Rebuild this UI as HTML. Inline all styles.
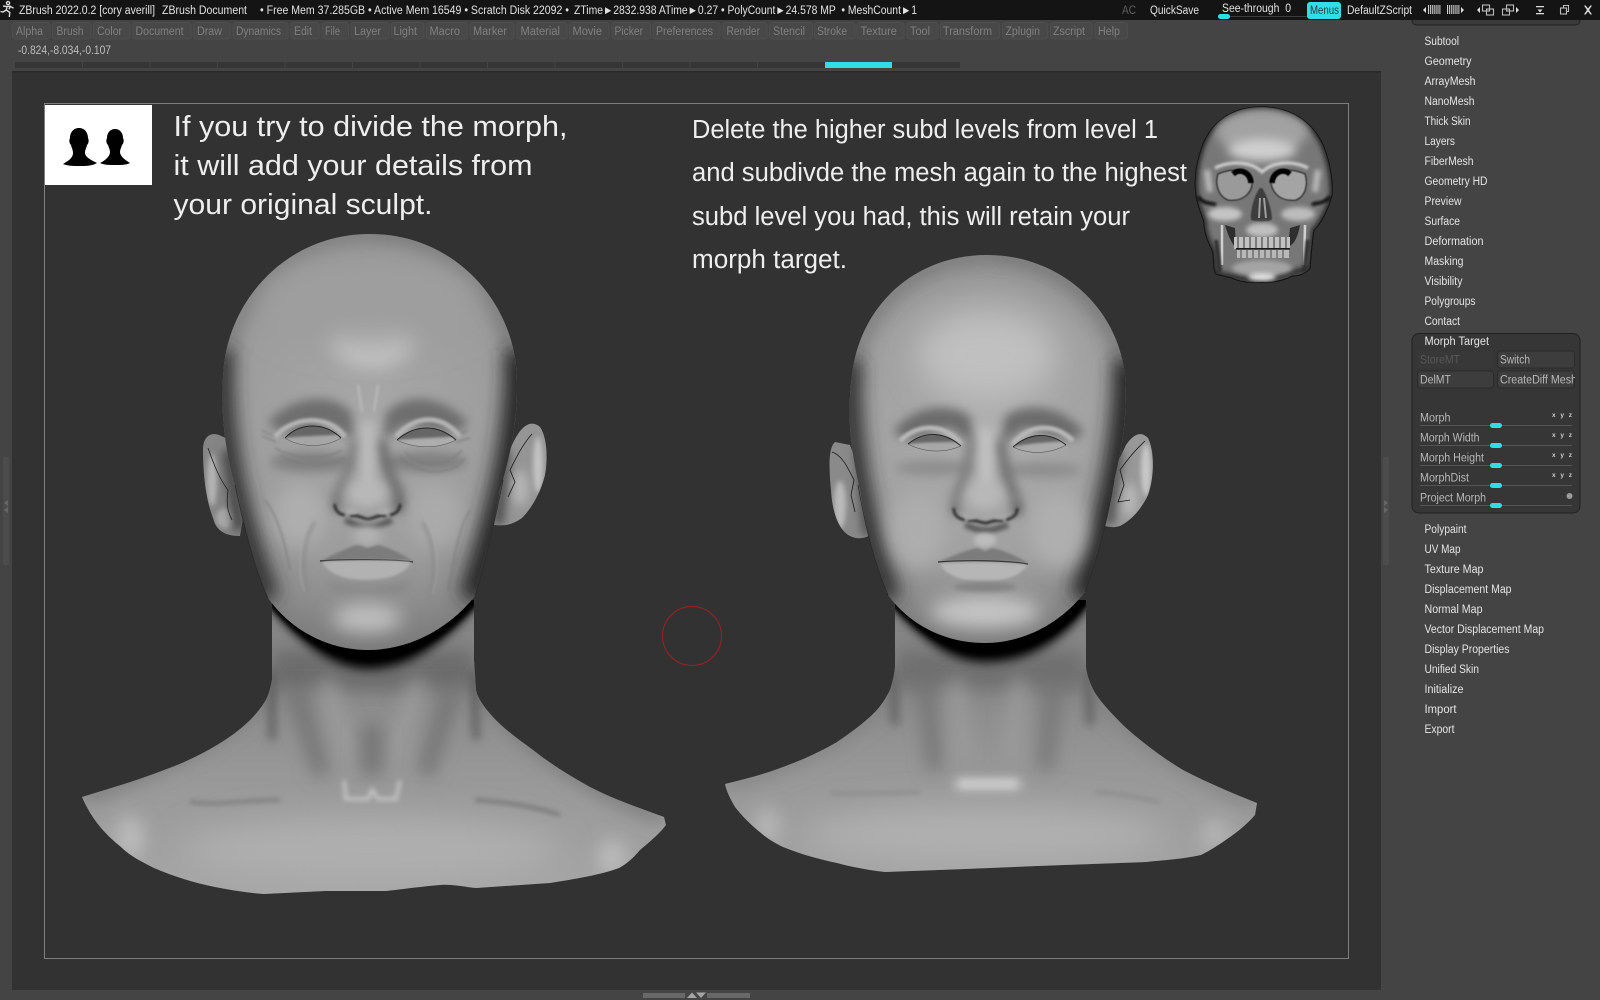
<!DOCTYPE html>
<html><head><meta charset="utf-8"><title>ZBrush</title>
<style>
html,body{margin:0;padding:0;width:1600px;height:1000px;overflow:hidden;background:#444}
svg{display:block;position:absolute;left:0;top:0}
text{font-family:"Liberation Sans",sans-serif}
</style></head><body>
<svg width="1600" height="1000" viewBox="0 0 1600 1000" xmlns="http://www.w3.org/2000/svg">
<defs>
<filter id="b05" filterUnits="userSpaceOnUse" x="0" y="0" width="1600" height="1000"><feGaussianBlur stdDeviation="0.5"/></filter>
<filter id="b1" filterUnits="userSpaceOnUse" x="0" y="0" width="1600" height="1000"><feGaussianBlur stdDeviation="1.2"/></filter>
<filter id="b2" filterUnits="userSpaceOnUse" x="0" y="0" width="1600" height="1000"><feGaussianBlur stdDeviation="2.5"/></filter>
<filter id="b4" filterUnits="userSpaceOnUse" x="0" y="0" width="1600" height="1000"><feGaussianBlur stdDeviation="5"/></filter>
<filter id="b8" filterUnits="userSpaceOnUse" x="0" y="0" width="1600" height="1000"><feGaussianBlur stdDeviation="9"/></filter>
<filter id="b15" filterUnits="userSpaceOnUse" x="0" y="0" width="1600" height="1000"><feGaussianBlur stdDeviation="16"/></filter>
<radialGradient id="lhg" gradientUnits="userSpaceOnUse" cx="368" cy="420" r="230">
<stop offset="0" stop-color="#a8a8a8"/><stop offset=".62" stop-color="#9c9c9c"/><stop offset=".85" stop-color="#8a8a8a"/><stop offset="1" stop-color="#7a7a7a"/></radialGradient>
<radialGradient id="rhg" gradientUnits="userSpaceOnUse" cx="985" cy="430" r="215">
<stop offset="0" stop-color="#aeaeae"/><stop offset=".62" stop-color="#a0a0a0"/><stop offset=".85" stop-color="#8c8c8c"/><stop offset="1" stop-color="#7a7a7a"/></radialGradient>
<linearGradient id="chest" x1="0" y1="660" x2="0" y2="895" gradientUnits="userSpaceOnUse"><stop offset="0" stop-color="#858585"/><stop offset=".5" stop-color="#989898"/><stop offset="1" stop-color="#a6a6a6"/></linearGradient>
<clipPath id="lhc"><path d="M370 234C290 234 232 295 224 365C219 410 226 460 238 495C246 535 255 570 268 598C292 632 330 650 368 650C408 650 448 630 475 596C485 565 495 520 500 490C512 450 520 410 516 365C508 295 450 234 370 234Z"/></clipPath>
<clipPath id="lsc"><path d="M272 600L272 680C270 690 268 697 264 703C256 715 247 724 235 733C219 745 200 755 182 763C160 772 140 779 121 785L82 797C92 820 105 834 121 847C130 856 142 862 154 868C175 877 195 883 215 887C230 890 248 893 264 894L325 891L386 891C405 889 425 886 440 885C452 884 464 887 476 888L550 883C575 879 600 875 619 868C628 863 634 857 640 850C652 840 660 833 666 825L664 817C640 808 615 800 590 787C572 777 552 765 533 750C518 739 504 729 493 717C484 707 478 699 476 690L474 660L474 600Z"/></clipPath>
<clipPath id="rhc"><path d="M987 255C915 255 860 305 852 375C846 420 852 455 860 490C866 530 875 565 888 595C910 625 945 643 985 643C1025 643 1062 622 1085 592C1095 565 1107 525 1112 490C1122 450 1128 415 1125 375C1117 305 1058 255 987 255Z"/></clipPath>
<clipPath id="rsc"><path d="M895 600L895 667C894 677 892 684 890 690C886 698 881 706 874 713C863 724 850 733 837 742C820 752 802 760 783 767C765 774 745 779 725 784C727 793 731 800 735 807C742 816 751 825 761 833C768 839 775 843 783 847C800 854 818 859 837 863C852 867 868 870 885 872L965 869L1037 866L1146 862C1165 860 1183 859 1201 855C1211 850 1220 844 1230 837C1240 830 1248 823 1255 815L1257 803C1232 793 1208 783 1183 770C1163 758 1143 743 1125 727C1115 717 1103 705 1095 693C1091 685 1087 677 1086 667L1086 600Z"/></clipPath>
<clipPath id="skc"><path d="M1261 107C1225 107 1207 130 1201 150C1196 165 1194 180 1196 195C1198 207 1202 215 1204 222C1204 235 1210 245 1213 252C1214 265 1214 272 1216 274L1232 278C1240 282 1252 283 1262 282C1272 283 1285 280 1292 276C1300 276 1308 272 1310 268C1311 255 1312 240 1314 230C1320 225 1328 210 1332 195C1333 180 1330 165 1325 150C1318 130 1298 107 1261 107Z"/></clipPath>
<clipPath id="e1"><path d="M219 435C210 432 203 437 203 450C203 475 206 500 213 518C216 530 224 536 240 536L246 500L230 440Z"/></clipPath>
<clipPath id="e2"><path d="M512 445C522 423 532 420 540 427C547 437 548 458 545 475C540 495 530 510 522 518C512 525 505 526 494 525L500 480Z"/></clipPath>
<clipPath id="e3"><path d="M835 442C828 448 829 470 831 490C832 510 838 530 850 536C858 540 866 538 870 535L866 490L850 445Z"/></clipPath>
<clipPath id="e4"><path d="M1126 445C1135 432 1142 432 1148 438C1154 450 1155 475 1148 495C1142 508 1132 520 1120 526C1113 528 1110 527 1105 526L1114 470Z"/></clipPath>
<clipPath id="cdm"><rect x="1497" y="371" width="78" height="17"/></clipPath>
<clipPath id="ey1"><path d="M285 438C300 422 325 422 341 438C325 448 300 448 285 438Z"/></clipPath>
<clipPath id="ey2"><path d="M397 440C415 424 438 424 456 440C438 449 415 449 397 440Z"/></clipPath>
<clipPath id="ey3"><path d="M908 444C925 430 945 432 961 446C945 453 925 453 908 444Z"/></clipPath>
<clipPath id="ey4"><path d="M1013 447C1030 432 1050 432 1066 445C1050 454 1030 455 1013 447Z"/></clipPath>
</defs>

<!-- app chrome -->
<rect width="1600" height="1000" fill="#444"/>
<rect width="1600" height="20" fill="#141414"/>
<rect x="12" y="72" width="1369" height="918" fill="#323232"/>
<rect x="12" y="71" width="1369" height="1.5" fill="#2a2a2a"/>
<rect x="44.500" y="103.500" width="1304" height="855" fill="none" stroke="#7e7e7e" stroke-width="1"/>

<!-- top bar text -->
<g fill="#e2e2e2" font-size="11.5">
<path d="M8 1.500a1.600 1.600 0 1 0 .1 0M3 6l4 .6 3-.4 3.500 2M7 6.500L6.300 10 3 12 .5 11.500M6.300 10l3.500 2.500-.5 4.500M10.500 6.200l-1.500 3" fill="none" stroke="#ddd" stroke-width="1.400"/>
<text x="19" y="14" textLength="136" lengthAdjust="spacingAndGlyphs">ZBrush 2022.0.2 [cory averill]</text>
<text x="162" y="14" textLength="85" lengthAdjust="spacingAndGlyphs">ZBrush Document</text>
<text x="260" y="14" textLength="309" lengthAdjust="spacingAndGlyphs">• Free Mem 37.285GB • Active Mem 16549 • Scratch Disk 22092 •</text>
<text x="574" y="14" textLength="343" lengthAdjust="spacingAndGlyphs" xml:space="preserve">ZTime►2832.938 ATime►0.27 • PolyCount►24.578 MP  • MeshCount►1</text>
<text x="1122" y="14" textLength="14" lengthAdjust="spacingAndGlyphs" fill="#5f5f5f">AC</text>
<text x="1150" y="14" textLength="49" lengthAdjust="spacingAndGlyphs">QuickSave</text>
<text x="1222" y="12" textLength="69" lengthAdjust="spacingAndGlyphs" xml:space="preserve">See-through  0</text>
<text x="1347" y="14" textLength="65" lengthAdjust="spacingAndGlyphs">DefaultZScript</text>
</g>
<rect x="1218" y="16" width="92" height="1" fill="#3c3c3c"/>
<rect x="1218" y="14" width="12" height="5" rx="2.500" fill="#2fdfe4"/>
<rect x="1307" y="2" width="34" height="17" rx="3" fill="#2fdfe4"/>
<text x="1310" y="14" textLength="29" lengthAdjust="spacingAndGlyphs" font-size="11.5" fill="#24414a">Menus</text>
<!-- top bar icons -->
<g fill="#ddd">
<path d="M1423 10l3-3v6zM1464 10l-3-3v6zM1477 10l3-3v6zM1519 10l-3-3v6z"/>
<path d="M1428 9.500h13M1447 9.500h13" stroke="#cfcfcf" stroke-width="9" stroke-dasharray="1 .9" fill="none"/>
<g fill="none" stroke="#bbb" stroke-width="1.100"><rect x="1482.500" y="5" width="7" height="6"/><rect x="1486.500" y="9" width="7" height="6"/><rect x="1506.500" y="5" width="7" height="6"/><rect x="1502.500" y="9" width="7" height="6"/><rect x="1560.500" y="8" width="6" height="6"/><path d="M1563.500 8V5.500h5v6h-2"/></g>
<path d="M1536 6h8v1.300h-8zM1536 13h8v1.300h-8zM1540 12.500l-2.500-3h5z"/>
<path d="M1584 5.500l1.600 0 2.400 3 2.400-3 1.600 0-3 4.500 3 4.500-1.600 0-2.400-3-2.400 3-1.600 0 3-4.500z"/>
</g>

<!-- menu row -->
<g fill="#484848" stroke="#4e4e4e" stroke-width="1">
<rect x="12.5" y="22.5" width="37.500" height="16.500" rx="3"/><rect x="52.5" y="22.5" width="38.500" height="16.500" rx="3"/><rect x="93.500" y="22.5" width="36.500" height="16.500" rx="3"/><rect x="133" y="22.5" width="58" height="16.500" rx="3"/><rect x="193.500" y="22.5" width="36.500" height="16.500" rx="3"/><rect x="233" y="22.5" width="55" height="16.500" rx="3"/><rect x="291" y="22.5" width="28" height="16.500" rx="3"/><rect x="322" y="22.5" width="26.500" height="16.500" rx="3"/><rect x="351" y="22.5" width="38" height="16.500" rx="3"/><rect x="391.500" y="22.5" width="32.500" height="16.500" rx="3"/><rect x="426.500" y="22.5" width="40.500" height="16.500" rx="3"/><rect x="470" y="22.5" width="44" height="16.500" rx="3"/><rect x="517" y="22.5" width="50" height="16.500" rx="3"/><rect x="569.500" y="22.5" width="39.500" height="16.500" rx="3"/><rect x="612" y="22.5" width="38.500" height="16.500" rx="3"/><rect x="653" y="22.5" width="67" height="16.500" rx="3"/><rect x="723" y="22.5" width="44" height="16.500" rx="3"/><rect x="769.500" y="22.5" width="43" height="16.500" rx="3"/><rect x="814.500" y="22.5" width="40.500" height="16.500" rx="3"/><rect x="857" y="22.5" width="47" height="16.500" rx="3"/><rect x="907" y="22.5" width="31" height="16.500" rx="3"/><rect x="940.500" y="22.5" width="59" height="16.500" rx="3"/><rect x="1002.500" y="22.5" width="45" height="16.500" rx="3"/><rect x="1050.500" y="22.5" width="41.500" height="16.500" rx="3"/><rect x="1095" y="22.5" width="32.500" height="16.500" rx="3"/>
</g>
<g fill="#808080" font-size="11.5">
<text x="16" y="35" textLength="27" lengthAdjust="spacingAndGlyphs">Alpha</text>
<text x="56.500" y="35" textLength="27" lengthAdjust="spacingAndGlyphs">Brush</text>
<text x="97" y="35" textLength="25" lengthAdjust="spacingAndGlyphs">Color</text>
<text x="135.500" y="35" textLength="48" lengthAdjust="spacingAndGlyphs">Document</text>
<text x="197" y="35" textLength="25" lengthAdjust="spacingAndGlyphs">Draw</text>
<text x="236" y="35" textLength="45" lengthAdjust="spacingAndGlyphs">Dynamics</text>
<text x="294" y="35" textLength="18" lengthAdjust="spacingAndGlyphs">Edit</text>
<text x="325" y="35" textLength="15" lengthAdjust="spacingAndGlyphs">File</text>
<text x="354" y="35" textLength="27" lengthAdjust="spacingAndGlyphs">Layer</text>
<text x="393.500" y="35" textLength="23.500" lengthAdjust="spacingAndGlyphs">Light</text>
<text x="429.500" y="35" textLength="30.500" lengthAdjust="spacingAndGlyphs">Macro</text>
<text x="473" y="35" textLength="34" lengthAdjust="spacingAndGlyphs">Marker</text>
<text x="520.500" y="35" textLength="39.500" lengthAdjust="spacingAndGlyphs">Material</text>
<text x="572.500" y="35" textLength="29.500" lengthAdjust="spacingAndGlyphs">Movie</text>
<text x="614.500" y="35" textLength="28.500" lengthAdjust="spacingAndGlyphs">Picker</text>
<text x="656" y="35" textLength="57" lengthAdjust="spacingAndGlyphs">Preferences</text>
<text x="726.500" y="35" textLength="33.500" lengthAdjust="spacingAndGlyphs">Render</text>
<text x="773" y="35" textLength="32" lengthAdjust="spacingAndGlyphs">Stencil</text>
<text x="817" y="35" textLength="30" lengthAdjust="spacingAndGlyphs">Stroke</text>
<text x="860.500" y="35" textLength="36.500" lengthAdjust="spacingAndGlyphs">Texture</text>
<text x="910" y="35" textLength="20" lengthAdjust="spacingAndGlyphs">Tool</text>
<text x="943" y="35" textLength="49" lengthAdjust="spacingAndGlyphs">Transform</text>
<text x="1005.500" y="35" textLength="34.500" lengthAdjust="spacingAndGlyphs">Zplugin</text>
<text x="1053" y="35" textLength="32" lengthAdjust="spacingAndGlyphs">Zscript</text>
<text x="1098" y="35" textLength="22" lengthAdjust="spacingAndGlyphs">Help</text>
</g>
<text x="18" y="54" textLength="93" lengthAdjust="spacingAndGlyphs" font-size="11.5" fill="#bdbdbd">-0.824,-8.034,-0.107</text>

<!-- strip -->
<rect x="15" y="62" width="945" height="6" fill="#363636"/>
<path d="M82.500 62v6M150 62v6M217.500 62v6M285 62v6M352.500 62v6M420 62v6M487.500 62v6M555 62v6M622.500 62v6M690 62v6M757.500 62v6" stroke="#444" stroke-width="1"/>
<rect x="825" y="62" width="67" height="6" fill="#2fdfe4"/>

<!-- side handles -->
<rect x="3" y="457" width="6" height="108" fill="#4c4c4c"/>
<path d="M4 503l4-3v6zM4 510l4 3v-6z" fill="#666"/>
<rect x="1383" y="457" width="6" height="108" fill="#4c4c4c"/>
<path d="M1388 503l-4-3v6zM1388 510l-4 3v-6z" fill="#666"/>
<rect x="643" y="993" width="42" height="5" fill="#686868"/><rect x="707" y="993" width="43" height="5" fill="#686868"/>
<path d="M687 998l5-5.500 5 5.500zM696 992.500h10l-5 5.500z" fill="#a5a5a5"/>

<!-- LEFT BUST -->
<g>
<g clip-path="url(#lsc)">
<rect x="60" y="590" width="640" height="320" fill="url(#chest)"/>
<path d="M82 797C150 770 210 750 270 690" stroke="#757575" stroke-width="12" fill="none" filter="url(#b8)"/>
<path d="M664 817C590 790 530 750 478 690" stroke="#757575" stroke-width="12" fill="none" filter="url(#b8)"/>
<ellipse cx="130" cy="838" rx="14" ry="22" fill="#bcbcbc" filter="url(#b8)"/>
<ellipse cx="612" cy="858" rx="14" ry="18" fill="#bcbcbc" filter="url(#b8)"/>
<ellipse cx="370" cy="850" rx="190" ry="32" fill="#afafaf" filter="url(#b15)"/>
<rect x="272" y="650" width="202" height="40" fill="#6c6c6c" filter="url(#b8)"/>
<path d="M272 670L272 740" stroke="#4a4a4a" stroke-width="5" filter="url(#b4)"/>
<path d="M474 670L476 740" stroke="#4a4a4a" stroke-width="5" filter="url(#b4)"/>
<path d="M295 690L322 775" stroke="#6e6e6e" stroke-width="14" filter="url(#b8)"/>
<path d="M452 690L425 775" stroke="#6e6e6e" stroke-width="14" filter="url(#b8)"/>
<path d="M325 680L352 760" stroke="#9e9e9e" stroke-width="14" filter="url(#b8)"/>
<path d="M420 680L390 760" stroke="#9e9e9e" stroke-width="14" filter="url(#b8)"/>
<path d="M372 725L372 775" stroke="#747474" stroke-width="22" filter="url(#b8)"/>
<path d="M344 780L346 799L368 799L372 790L378 799L396 799L400 780" fill="none" stroke="#c4c4c4" stroke-width="3.500" filter="url(#b2)"/>
<path d="M190 802C220 806 240 800 280 800" stroke="#808080" stroke-width="4" fill="none" filter="url(#b2)"/>
<path d="M475 800C510 802 540 808 560 815" stroke="#7a7a7a" stroke-width="4" fill="none" filter="url(#b2)"/>
<path d="M262 596C295 640 330 668 368 669C410 668 445 645 486 594Z" fill="#000" filter="url(#b4)"/>
<path d="M265 600C295 636 330 660 368 660C410 660 445 640 482 598Z" fill="#000" filter="url(#b2)"/>
</g>
<!-- left ears -->
<path d="M219 435C210 432 203 437 203 450C203 475 206 500 213 518C216 530 224 536 240 536L246 500L230 440Z" fill="#858585"/>
<g clip-path="url(#e1)">
<ellipse cx="212" cy="480" rx="5" ry="26" fill="#b4b4b4" filter="url(#b2)"/>
<ellipse cx="225" cy="518" rx="9" ry="10" fill="#a8a8a8" filter="url(#b2)"/>
<path d="M228 450L240 530" stroke="#444" stroke-width="12" filter="url(#b4)"/>
</g>
<path d="M208 448C214 465 220 480 228 490C226 505 228 512 232 520" fill="none" stroke="#1f1f1f" stroke-width=".8"/>
<path d="M512 445C522 423 532 420 540 427C547 437 548 458 545 475C540 495 530 510 522 518C512 525 505 526 494 525L500 480Z" fill="#959595"/>
<g clip-path="url(#e2)">
<ellipse cx="538" cy="465" rx="5" ry="28" fill="#c2c2c2" filter="url(#b2)"/>
<ellipse cx="520" cy="488" rx="9" ry="18" fill="#b4b4b4" filter="url(#b4)"/>
<path d="M505 450L498 525" stroke="#444" stroke-width="10" filter="url(#b4)"/>
</g>
<path d="M532 434C522 445 515 460 510 470L515 482L508 497" fill="none" stroke="#1a1a1a" stroke-width=".8"/>
<!-- left head -->
<g clip-path="url(#lhc)">
<rect x="200" y="220" width="340" height="440" fill="url(#lhg)"/>
<path d="M370 234C290 234 232 295 224 365" fill="none" stroke="#6a6a6a" stroke-width="8" filter="url(#b8)"/>
<path d="M370 234C450 234 508 295 516 365" fill="none" stroke="#626262" stroke-width="8" filter="url(#b8)"/>
<ellipse cx="372" cy="338" rx="42" ry="30" fill="#c8c8c8" filter="url(#b8)"/>
<ellipse cx="370" cy="300" rx="110" ry="45" fill="#9e9e9e" filter="url(#b15)"/>
<path d="M222 350C218 430 234 510 268 600" stroke="#2e2e2e" stroke-width="24" fill="none" filter="url(#b8)"/>
<path d="M518 350C522 430 498 520 472 600" stroke="#282828" stroke-width="28" fill="none" filter="url(#b8)"/>
<ellipse cx="300" cy="515" rx="26" ry="32" fill="#aeaeae" filter="url(#b8)"/>
<ellipse cx="435" cy="515" rx="26" ry="32" fill="#aaa" filter="url(#b8)"/>
<!-- brow / sockets -->
<path d="M268 422C295 393 335 393 352 413L354 440L330 425L280 432Z" fill="#6e6e6e" filter="url(#b4)"/>
<path d="M468 422C440 393 405 393 386 413L383 440L405 425L458 432Z" fill="#6e6e6e" filter="url(#b4)"/>
<ellipse cx="312" cy="462" rx="42" ry="10" fill="#808080" filter="url(#b4)"/>
<ellipse cx="425" cy="462" rx="42" ry="10" fill="#808080" filter="url(#b4)"/>
<!-- forehead folds -->
<path d="M358 385L362 412M378 385L374 412" stroke="#bdbdbd" stroke-width="2" filter="url(#b1)"/>
<!-- wrinkles -->
<g fill="none" stroke="#7a7a7a" stroke-width="1.200" filter="url(#b1)">
<path d="M275 448C295 460 325 460 342 450"/><path d="M280 455C300 468 325 468 345 458"/>
<path d="M405 452C420 468 445 470 462 450"/><path d="M400 458C420 475 450 478 465 458"/>
<path d="M262 430L275 437M262 436L276 442M468 430L455 437M470 438L456 442"/>
<path d="M265 500C280 520 285 545 290 570"/>
<path d="M470 510C458 530 455 555 448 590"/>
</g>
<g fill="none" stroke="#b8b8b8" stroke-width="1.300" filter="url(#b1)" opacity=".7"><path d="M310 520C300 540 297 570 305 592"/><path d="M425 520C438 540 440 570 432 595"/></g>
<g fill="none" stroke="#868686" stroke-width="2.500" filter="url(#b2)"><path d="M315 522C303 540 300 570 308 595"/><path d="M422 522C434 540 438 570 430 598"/></g>
<!-- eyelids -->
<path d="M275 437C292 417 328 413 345 437" stroke="#b4b4b4" stroke-width="5" fill="none" filter="url(#b1)"/>
<path d="M396 437C415 414 443 414 460 437" stroke="#b4b4b4" stroke-width="5" fill="none" filter="url(#b1)"/>
<path d="M285 438C300 422 325 422 341 438C325 448 300 448 285 438Z" fill="#a6a6a6"/>
<path d="M397 440C415 424 438 424 456 440C438 449 415 449 397 440Z" fill="#adadad"/>
<g clip-path="url(#ey1)"><path d="M283 432C300 420 325 420 343 432L343 434C325 436 300 436 283 438Z" fill="#666" filter="url(#b1)"/></g>
<g clip-path="url(#ey2)"><path d="M395 434C415 422 438 422 458 434L458 436C438 438 415 438 395 440Z" fill="#666" filter="url(#b1)"/></g>
<path d="M285 438C300 422 325 422 341 438" fill="none" stroke="#222" stroke-width=".9"/>
<path d="M397 440C415 424 438 424 456 440" fill="none" stroke="#222" stroke-width=".9"/>
<path d="M285 438C300 448 325 448 341 438M397 440C415 449 438 449 456 440" fill="none" stroke="#4a4a4a" stroke-width=".5"/>
<!-- nose -->
<path d="M355 440C350 465 345 480 336 495" stroke="#7a7a7a" stroke-width="8" fill="none" filter="url(#b4)"/>
<path d="M381 440C385 465 392 480 400 495" stroke="#6a6a6a" stroke-width="10" fill="none" filter="url(#b4)"/>
<path d="M368 422L368 490" stroke="#bdbdbd" stroke-width="13" filter="url(#b4)"/>
<ellipse cx="367" cy="493" rx="19" ry="14" fill="#b8b8b8" filter="url(#b4)"/>
<ellipse cx="336" cy="503" rx="4" ry="10" fill="#666" filter="url(#b4)"/>
<ellipse cx="399" cy="503" rx="5" ry="11" fill="#5a5a5a" filter="url(#b4)"/>
<path d="M335 504C334 509 339 515 345 515M400 504C400 510 396 514 390 515" fill="none" stroke="#222" stroke-width="2.500" filter="url(#b1)"/>
<path d="M350 516C358 514 362 519 368 519C374 519 378 514 386 516" fill="none" stroke="#2a2a2a" stroke-width="3" filter="url(#b1)"/>
<path d="M345 520C355 524 360 527 368 526C376 527 382 524 392 520" fill="none" stroke="#555" stroke-width="6" filter="url(#b2)"/>
<ellipse cx="352" cy="511" rx="6" ry="3.500" fill="#a8a8a8" filter="url(#b1)"/><ellipse cx="383" cy="511" rx="6" ry="3.500" fill="#a8a8a8" filter="url(#b1)"/>
<!-- mouth -->
<ellipse cx="367" cy="535" rx="14" ry="10" fill="#b2b2b2" filter="url(#b4)"/>
<path d="M320 561C340 552 352 545 358 545C362 546 365 547 367 548C371 547 375 546 378 545C388 547 400 553 413 561C395 560 345 560 320 561Z" fill="#7c7c7c" filter="url(#b1)"/>
<path d="M320 561C340 559 395 559 413 562" fill="none" stroke="#2a2a2a" stroke-width="1.200"/>
<path d="M322 562C345 560 390 560 411 562C405 575 385 580 367 580C345 580 330 575 322 562Z" fill="#b2b2b2" filter="url(#b1)"/>
<path d="M325 578C345 590 390 590 412 578C405 598 385 598 367 595C345 598 330 592 325 578Z" fill="#868686" filter="url(#b4)"/>
<ellipse cx="367" cy="618" rx="34" ry="14" fill="#c0c0c0" filter="url(#b8)"/>
</g>
<path d="M235 485C246 535 255 570 268 598M503 480C495 520 485 565 475 596" fill="none" stroke="#2a2a2a" stroke-width=".8"/>
</g>

<!-- RIGHT BUST -->
<g>
<g clip-path="url(#rsc)">
<rect x="710" y="590" width="560" height="300" fill="url(#chest)"/>
<path d="M725 784C790 765 850 740 893 690" stroke="#7a7a7a" stroke-width="10" fill="none" filter="url(#b8)"/>
<path d="M1257 803C1190 775 1140 740 1090 690" stroke="#7a7a7a" stroke-width="10" fill="none" filter="url(#b8)"/>
<ellipse cx="768" cy="826" rx="12" ry="18" fill="#b8b8b8" filter="url(#b8)"/>
<ellipse cx="1215" cy="835" rx="15" ry="16" fill="#b4b4b4" filter="url(#b8)"/>
<ellipse cx="985" cy="835" rx="180" ry="28" fill="#b0b0b0" filter="url(#b15)"/>
<rect x="895" y="650" width="190" height="40" fill="#707070" filter="url(#b8)"/>
<path d="M893 670L895 725" stroke="#606060" stroke-width="8" filter="url(#b4)"/>
<path d="M1088 670L1090 725" stroke="#606060" stroke-width="8" filter="url(#b4)"/>
<path d="M925 680L935 770" stroke="#727272" stroke-width="14" filter="url(#b8)"/>
<path d="M1055 680L1045 770" stroke="#727272" stroke-width="14" filter="url(#b8)"/>
<path d="M955 680L965 760" stroke="#9c9c9c" stroke-width="14" filter="url(#b8)"/>
<path d="M1020 680L1010 760" stroke="#9c9c9c" stroke-width="14" filter="url(#b8)"/>
<rect x="954" y="778" width="68" height="12" rx="6" fill="#c6c6c6" filter="url(#b4)"/>
<rect x="960" y="780" width="56" height="8" rx="4" fill="#c4c4c4" filter="url(#b2)"/>
<path d="M830 793C860 794 890 793 920 792M1095 792C1120 793 1140 798 1160 802" stroke="#8e8e8e" stroke-width="4" fill="none" filter="url(#b2)"/>
<path d="M880 592C920 640 950 662 985 662C1030 662 1070 640 1100 588Z" fill="#000" filter="url(#b4)"/>
<path d="M882 595C920 635 950 654 985 654C1030 654 1070 632 1097 590Z" fill="#000" filter="url(#b2)"/>
</g>
<!-- right ears -->
<path d="M835 442C828 448 829 470 831 490C832 510 838 530 850 536C858 540 866 538 870 535L866 490L850 445Z" fill="#8a8a8a"/>
<g clip-path="url(#e3)">
<ellipse cx="840" cy="505" rx="6" ry="24" fill="#bababa" filter="url(#b2)"/>
<path d="M860 450L868 535" stroke="#4a4a4a" stroke-width="10" filter="url(#b4)"/>
</g>
<path d="M832 452C842 455 848 468 854 480L851 495L855 512" fill="none" stroke="#1a1a1a" stroke-width=".8"/>
<path d="M1126 445C1135 432 1142 432 1148 438C1154 450 1155 475 1148 495C1142 508 1132 520 1120 526C1113 528 1110 527 1105 526L1114 470Z" fill="#989898"/>
<g clip-path="url(#e4)">
<ellipse cx="1146" cy="470" rx="5" ry="26" fill="#c8c8c8" filter="url(#b2)"/>
<ellipse cx="1129" cy="500" rx="9" ry="17" fill="#b6b6b6" filter="url(#b4)"/>
<path d="M1118 450L1108 525" stroke="#4a4a4a" stroke-width="10" filter="url(#b4)"/>
</g>
<path d="M1145 441C1135 450 1127 460 1120 470L1124 485L1118 502L1130 500" fill="none" stroke="#1a1a1a" stroke-width=".8"/>
<!-- right head -->
<g clip-path="url(#rhc)">
<rect x="820" y="240" width="340" height="420" fill="url(#rhg)"/>
<path d="M987 255C915 255 860 305 852 375" fill="none" stroke="#666" stroke-width="8" filter="url(#b8)"/>
<path d="M987 255C1058 255 1117 305 1125 375" fill="none" stroke="#5e5e5e" stroke-width="8" filter="url(#b8)"/>
<ellipse cx="987" cy="355" rx="70" ry="45" fill="#c0c0c0" filter="url(#b15)"/>
<path d="M850 360C846 430 860 520 890 600" stroke="#2e2e2e" stroke-width="24" fill="none" filter="url(#b8)"/>
<path d="M1127 360C1128 440 1108 520 1083 600" stroke="#282828" stroke-width="28" fill="none" filter="url(#b8)"/>
<ellipse cx="985" cy="612" rx="55" ry="16" fill="#c5c5c5" filter="url(#b8)"/>
<ellipse cx="918" cy="530" rx="28" ry="38" fill="#adadad" filter="url(#b8)"/>
<ellipse cx="1058" cy="530" rx="28" ry="38" fill="#afafaf" filter="url(#b8)"/>
<!-- sockets -->
<path d="M893 432C915 403 950 403 970 416L974 445L950 428L905 440Z" fill="#6c6c6c" filter="url(#b4)"/>
<path d="M1084 432C1060 403 1025 403 1005 416L1001 445L1025 428L1074 440Z" fill="#6c6c6c" filter="url(#b4)"/>
<ellipse cx="935" cy="468" rx="40" ry="8" fill="#8e8e8e" filter="url(#b4)"/>
<ellipse cx="1042" cy="470" rx="40" ry="8" fill="#8e8e8e" filter="url(#b4)"/>
<path d="M900 441C918 423 945 423 962 445" stroke="#b8b8b8" stroke-width="5" fill="none" filter="url(#b1)"/>
<path d="M1012 445C1030 423 1055 423 1073 441" stroke="#b8b8b8" stroke-width="5" fill="none" filter="url(#b1)"/>
<path d="M908 444C925 430 945 432 961 446C945 453 925 453 908 444Z" fill="#a8a8a8"/>
<path d="M1013 447C1030 432 1050 432 1066 445C1050 454 1030 455 1013 447Z" fill="#ababab"/>
<g clip-path="url(#ey3)"><path d="M906 438C925 428 945 430 963 440L963 442C945 442 925 442 906 444Z" fill="#666" filter="url(#b1)"/></g>
<g clip-path="url(#ey4)"><path d="M1011 441C1030 430 1050 430 1068 439L1068 441C1050 442 1030 443 1011 447Z" fill="#666" filter="url(#b1)"/></g>
<path d="M908 444C925 430 945 432 961 446M1013 447C1030 432 1050 432 1066 445" fill="none" stroke="#222" stroke-width=".9"/>
<path d="M908 444C925 453 945 453 961 446M1013 447C1030 455 1050 454 1066 445" fill="none" stroke="#444" stroke-width=".5"/>
<!-- nose -->
<path d="M972 440C968 465 962 485 955 498" stroke="#7c7c7c" stroke-width="9" fill="none" filter="url(#b4)"/>
<path d="M1000 440C1003 465 1010 485 1016 498" stroke="#6e6e6e" stroke-width="10" fill="none" filter="url(#b4)"/>
<path d="M986 428L986 490" stroke="#c4c4c4" stroke-width="12" filter="url(#b4)"/>
<ellipse cx="985" cy="495" rx="18" ry="14" fill="#b8b8b8" filter="url(#b4)"/>
<ellipse cx="955" cy="507" rx="4" ry="10" fill="#666" filter="url(#b4)"/>
<ellipse cx="1017" cy="507" rx="5" ry="10" fill="#5c5c5c" filter="url(#b4)"/>
<path d="M954 508C953 514 958 519 965 520M1017 508C1018 514 1013 518 1006 520" fill="none" stroke="#222" stroke-width="2.500" filter="url(#b1)"/>
<path d="M968 521C976 519 980 523 985 523C990 523 994 519 1003 521" fill="none" stroke="#2a2a2a" stroke-width="3" filter="url(#b1)"/>
<path d="M965 525C975 528 978 531 985 530C993 531 997 528 1008 525" fill="none" stroke="#555" stroke-width="6" filter="url(#b2)"/>
<ellipse cx="970" cy="516" rx="6" ry="3.500" fill="#a6a6a6" filter="url(#b1)"/><ellipse cx="1000" cy="516" rx="6" ry="3.500" fill="#a6a6a6" filter="url(#b1)"/>
<!-- mouth -->
<ellipse cx="985" cy="540" rx="11" ry="7" fill="#bcbcbc" filter="url(#b2)"/>
<path d="M938 562C955 555 972 548 978 548L985 551L992 548C1000 549 1015 555 1028 563C1010 561 960 560 938 562Z" fill="#7c7c7c" filter="url(#b1)"/>
<path d="M938 562C960 560 1005 560 1028 564" fill="none" stroke="#2a2a2a" stroke-width="1.200"/>
<path d="M940 564C960 562 1005 562 1027 565C1020 578 1000 581 985 581C965 581 948 578 940 564Z" fill="#b6b6b6" filter="url(#b1)"/>
<ellipse cx="985" cy="587" rx="32" ry="5" fill="#848484" filter="url(#b2)"/>
</g>
<path d="M858 485C866 530 875 565 888 595M1114 480C1107 525 1095 565 1085 592" fill="none" stroke="#2a2a2a" stroke-width=".8"/>
</g>

<!-- SKULL -->
<g>
<path d="M1261 107C1225 107 1207 130 1201 150C1196 165 1194 180 1196 195C1198 207 1202 215 1204 222C1204 235 1210 245 1213 252C1214 265 1214 272 1216 274L1232 278C1240 282 1252 283 1262 282C1272 283 1285 280 1292 276C1300 276 1308 272 1310 268C1311 255 1312 240 1314 230C1320 225 1328 210 1332 195C1333 180 1330 165 1325 150C1318 130 1298 107 1261 107Z" fill="#777" stroke="#0c0c0c" stroke-width="1.200"/>
<g clip-path="url(#skc)">
<path d="M1261 107C1225 107 1207 130 1201 150C1196 165 1194 180 1196 195C1198 207 1202 215 1204 222C1204 235 1210 245 1213 252L1216 274L1262 282L1310 268L1314 230C1320 225 1328 210 1332 195C1333 180 1330 165 1325 150C1318 130 1298 107 1261 107Z" fill="none" stroke="#2a2a2a" stroke-width="6" filter="url(#b2)"/>
<ellipse cx="1262" cy="132" rx="46" ry="22" fill="#a2a2a2" filter="url(#b4)"/>
<ellipse cx="1262" cy="150" rx="34" ry="11" fill="#cfcfcf" filter="url(#b4)"/>
<path d="M1207 170L1210 192M1318 170L1315 192" stroke="#bcbcbc" stroke-width="6" filter="url(#b2)"/>
<path d="M1198 197C1205 205 1210 202 1216 205M1330 197C1322 205 1316 202 1312 205" stroke="#0c0c0c" stroke-width="3.500" fill="none" filter="url(#b1)"/>
<!-- sockets -->
<path d="M1218 174C1235 167 1250 170 1252 180C1253 192 1244 202 1228 200C1218 196 1215 184 1218 174Z" fill="#9a9a9a" stroke="#333" stroke-width="1.500" filter="url(#b05)"/>
<path d="M1305 174C1288 167 1273 170 1271 180C1271 192 1280 202 1296 200C1306 196 1308 184 1305 174Z" fill="#a4a4a4" stroke="#333" stroke-width="1.500" filter="url(#b05)"/>
<path d="M1233 174C1240 168 1250 172 1251 183" stroke="#000" stroke-width="5.500" fill="none" filter="url(#b05)"/>
<path d="M1290 174C1283 168 1273 172 1272 183" stroke="#000" stroke-width="5.500" fill="none" filter="url(#b05)"/>
<path d="M1215 168C1232 160 1252 162 1262 172C1272 162 1292 160 1308 168" stroke="#d6d6d6" stroke-width="3" fill="none" filter="url(#b1)"/>
<!-- nose -->
<path d="M1260 188C1254 195 1250 212 1251 220C1256 222 1258 221 1261 222C1265 221 1270 222 1272 219C1272 210 1267 195 1262 188Z" fill="#3e3e3e" filter="url(#b05)"/>
<path d="M1260 198L1259 218M1264 198L1266 218" stroke="#9e9e9e" stroke-width="2"/>
<ellipse cx="1225" cy="214" rx="17" ry="7" fill="#c4c4c4" filter="url(#b2)"/>
<ellipse cx="1298" cy="214" rx="17" ry="7" fill="#bcbcbc" filter="url(#b2)"/>
<ellipse cx="1262" cy="230" rx="16" ry="7" fill="#bfbfbf" filter="url(#b2)"/>
<path d="M1225 225C1228 235 1232 245 1236 247L1235 228ZM1300 225C1298 236 1295 244 1288 247L1290 228Z" fill="#2e2e2e"/>
<rect x="1234" y="237" width="56" height="12" fill="#c2c2c2"/>
<path d="M1238 237v12M1244 237v12M1250 237v12M1256 237v12M1262 237v12M1268 237v12M1274 237v12M1280 237v12M1286 237v12" stroke="#4a4a4a" stroke-width="1.200"/>
<rect x="1236" y="248" width="54" height="1.500" fill="#1a1a1a"/>
<rect x="1237" y="250" width="52" height="8" fill="#b8b8b8"/>
<path d="M1241 250v8M1247 250v8M1253 250v8M1259 250v8M1265 250v8M1271 250v8M1277 250v8M1283 250v8" stroke="#4a4a4a" stroke-width="1"/>
<ellipse cx="1262" cy="268" rx="30" ry="8" fill="#a4a4a4" filter="url(#b2)"/>
<ellipse cx="1262" cy="277" rx="14" ry="4" fill="#e0e0e0" filter="url(#b2)"/>
<path d="M1222 225L1222 265M1305 225L1304 265" stroke="#d0d0d0" stroke-width="2.500"/>
<path d="M1216 240L1220 272M1308 240L1304 272" stroke="#2e2e2e" stroke-width="4" filter="url(#b1)"/>
</g>
</g>

<!-- white box -->
<rect x="45" y="105" width="107" height="80" fill="#fff"/>
<path d="M79 128C73 128 70 133 70 138C69 140 69 143 71 145C72 149 73 150 73 153C73 157 70 160 63 164C68 166 73 166 79 166C86 166 92 166 97 163C91 160 85 157 85 153C85 150 86 149 87 145C89 143 89 140 88 138C88 133 85 128 79 128Z" fill="#000"/>
<path d="M115 129C110 129 107 133 107 138C106 140 106 143 108 145C109 148 110 150 110 152C110 156 106 160 100 163C104 165 109 165 115 165C121 165 126 165 130 163C125 160 120 156 120 152C120 150 121 148 122 145C124 143 124 140 123 138C123 133 120 129 115 129Z" fill="#000"/>

<!-- overlay text -->
<g fill="#eeeeee" font-size="28.500">
<text x="173.500" y="136" textLength="394" lengthAdjust="spacingAndGlyphs">If you try to divide the morph,</text>
<text x="173.500" y="175" textLength="359" lengthAdjust="spacingAndGlyphs">it will add your details from</text>
<text x="173.500" y="214" textLength="259" lengthAdjust="spacingAndGlyphs">your original sculpt.</text>
</g>
<g fill="#eeeeee" font-size="25.500">
<text x="692" y="138" textLength="466" lengthAdjust="spacingAndGlyphs">Delete the higher subd levels from level 1</text>
<text x="692" y="181" textLength="495" lengthAdjust="spacingAndGlyphs">and subdivde the mesh again to the highest</text>
<text x="692" y="225" textLength="438" lengthAdjust="spacingAndGlyphs">subd level you had, this will retain your</text>
<text x="692" y="268" textLength="155" lengthAdjust="spacingAndGlyphs">morph target.</text>
</g>

<!-- red circle -->
<circle cx="692" cy="636" r="29.500" fill="none" stroke="#8f2226" stroke-width="1.200"/>

<!-- right palette -->
<path d="M1412 20v1c0 2 2 4 5 4h158c3 0 5-2 5-4v-1" fill="#3a3a3a" stroke="#222" stroke-width="1"/>
<g fill="#e4e4e4" font-size="11.500">
<text x="1424.500" y="45" textLength="34.500" lengthAdjust="spacingAndGlyphs">Subtool</text>
<text x="1424.500" y="65" textLength="47" lengthAdjust="spacingAndGlyphs">Geometry</text>
<text x="1424.500" y="85" textLength="51" lengthAdjust="spacingAndGlyphs">ArrayMesh</text>
<text x="1424.500" y="105" textLength="50" lengthAdjust="spacingAndGlyphs">NanoMesh</text>
<text x="1424.500" y="125" textLength="46" lengthAdjust="spacingAndGlyphs">Thick Skin</text>
<text x="1424.500" y="145" textLength="30.500" lengthAdjust="spacingAndGlyphs">Layers</text>
<text x="1424.500" y="165" textLength="49" lengthAdjust="spacingAndGlyphs">FiberMesh</text>
<text x="1424.500" y="185" textLength="63" lengthAdjust="spacingAndGlyphs">Geometry HD</text>
<text x="1424.500" y="205" textLength="37" lengthAdjust="spacingAndGlyphs">Preview</text>
<text x="1424.500" y="225" textLength="35.500" lengthAdjust="spacingAndGlyphs">Surface</text>
<text x="1424.500" y="245" textLength="59" lengthAdjust="spacingAndGlyphs">Deformation</text>
<text x="1424.500" y="265" textLength="39" lengthAdjust="spacingAndGlyphs">Masking</text>
<text x="1424.500" y="285" textLength="38" lengthAdjust="spacingAndGlyphs">Visibility</text>
<text x="1424.500" y="305" textLength="51" lengthAdjust="spacingAndGlyphs">Polygroups</text>
<text x="1424.500" y="325" textLength="35.500" lengthAdjust="spacingAndGlyphs">Contact</text>
<text x="1424.500" y="533" textLength="42" lengthAdjust="spacingAndGlyphs">Polypaint</text>
<text x="1424.500" y="553" textLength="36" lengthAdjust="spacingAndGlyphs">UV Map</text>
<text x="1424.500" y="573" textLength="59" lengthAdjust="spacingAndGlyphs">Texture Map</text>
<text x="1424.500" y="593" textLength="87" lengthAdjust="spacingAndGlyphs">Displacement Map</text>
<text x="1424.500" y="613" textLength="58" lengthAdjust="spacingAndGlyphs">Normal Map</text>
<text x="1424.500" y="633" textLength="119.500" lengthAdjust="spacingAndGlyphs">Vector Displacement Map</text>
<text x="1424.500" y="653" textLength="85" lengthAdjust="spacingAndGlyphs">Display Properties</text>
<text x="1424.500" y="673" textLength="54.500" lengthAdjust="spacingAndGlyphs">Unified Skin</text>
<text x="1424.500" y="693" textLength="39" lengthAdjust="spacingAndGlyphs">Initialize</text>
<text x="1424.500" y="713" textLength="32" lengthAdjust="spacingAndGlyphs">Import</text>
<text x="1424.500" y="733" textLength="30" lengthAdjust="spacingAndGlyphs">Export</text>
</g>
<!-- morph panel -->
<rect x="1412" y="333.500" width="168" height="179.500" rx="7" fill="#363636" stroke="#222" stroke-width="1"/>
<text x="1424.500" y="345" textLength="64.500" lengthAdjust="spacingAndGlyphs" font-size="11.500" fill="#e4e4e4">Morph Target</text>
<g fill="#3d3d3d" stroke="#2b2b2b" stroke-width="1">
<rect x="1417.500" y="351" width="76" height="17" rx="3" fill="#383838" stroke="none"/>
<rect x="1497.500" y="351" width="77" height="17" rx="3"/>
<rect x="1417.500" y="371" width="76" height="17" rx="3"/>
<rect x="1497.500" y="371" width="77" height="17" rx="3"/>
</g>
<g font-size="11.500" fill="#b8b8b8">
<text x="1420" y="363.500" textLength="40" lengthAdjust="spacingAndGlyphs" fill="#575757">StoreMT</text>
<text x="1500" y="363.500" textLength="30" lengthAdjust="spacingAndGlyphs">Switch</text>
<text x="1420" y="383.500" textLength="31" lengthAdjust="spacingAndGlyphs">DelMT</text>
<g clip-path="url(#cdm)"><text x="1500" y="383.500" textLength="77" lengthAdjust="spacingAndGlyphs">CreateDiff Mesh</text></g>
<text x="1420" y="421.500" textLength="30.500" lengthAdjust="spacingAndGlyphs">Morph</text>
<text x="1420" y="441.500" textLength="59.500" lengthAdjust="spacingAndGlyphs">Morph Width</text>
<text x="1420" y="461.500" textLength="64" lengthAdjust="spacingAndGlyphs">Morph Height</text>
<text x="1420" y="481.500" textLength="49" lengthAdjust="spacingAndGlyphs">MorphDist</text>
<text x="1420" y="501.500" textLength="66" lengthAdjust="spacingAndGlyphs">Project Morph</text>
</g>
<path d="M1420 425.500H1572M1420 445.500H1572M1420 465.500H1572M1420 485.500H1572M1420 505.500H1572" stroke="#555" stroke-width="1"/>
<g fill="#2fdfe4"><rect x="1490" y="423" width="12" height="5" rx="2.500"/><rect x="1490" y="443" width="12" height="5" rx="2.500"/><rect x="1490" y="463" width="12" height="5" rx="2.500"/><rect x="1490" y="483" width="12" height="5" rx="2.500"/><rect x="1490" y="503" width="12" height="5" rx="2.500"/></g>
<g font-size="6.500" fill="#cfcfcf" font-weight="bold">
<text x="1552" y="417" textLength="20" xml:space="preserve">x y z</text>
<text x="1552" y="437" textLength="20" xml:space="preserve">x y z</text>
<text x="1552" y="457" textLength="20" xml:space="preserve">x y z</text>
<text x="1552" y="477" textLength="20" xml:space="preserve">x y z</text>
</g>
<circle cx="1569.500" cy="496" r="3" fill="#9c9c9c"/>
</svg>
</body></html>
